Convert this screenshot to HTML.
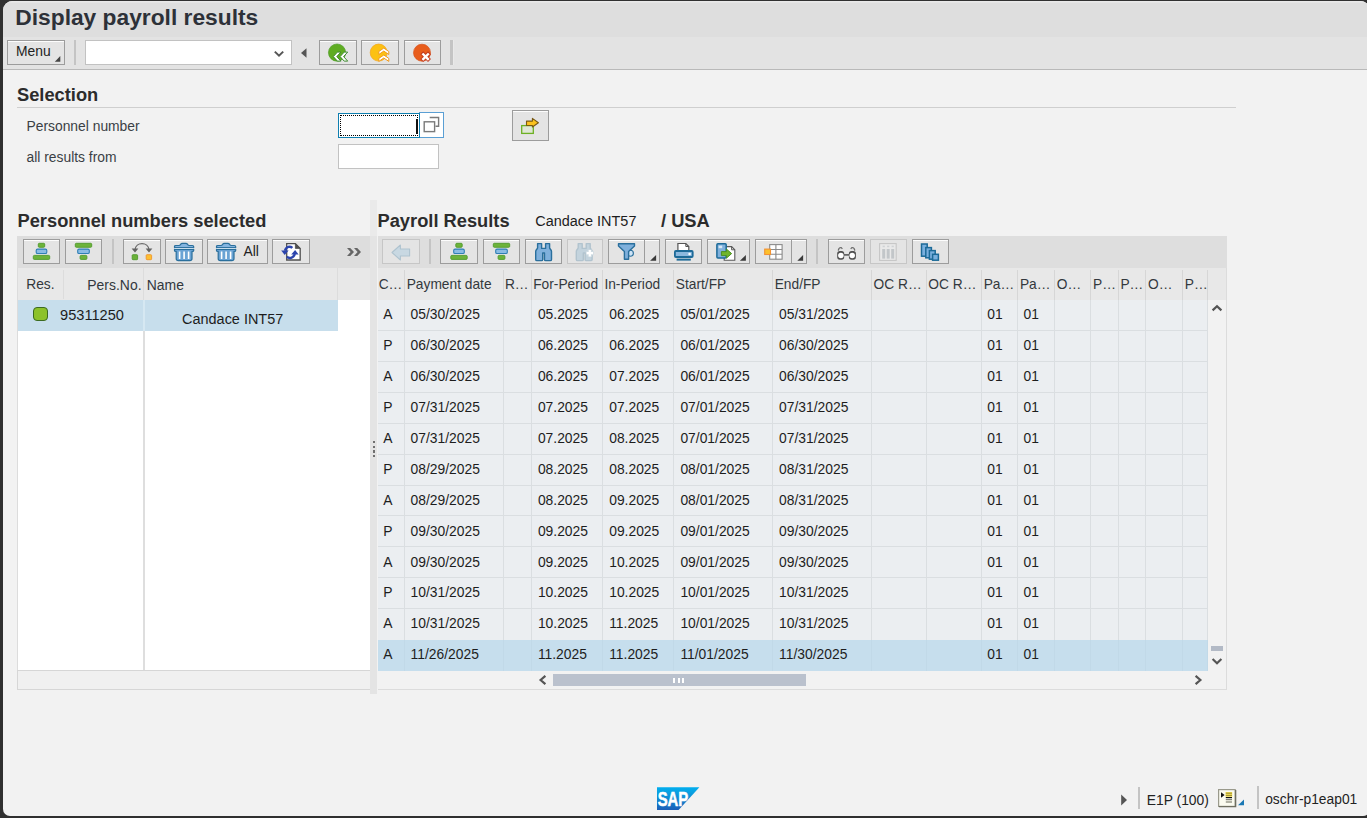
<!DOCTYPE html>
<html>
<head>
<meta charset="utf-8">
<title>Display payroll results</title>
<style>
html,body{margin:0;padding:0;}
body{width:1367px;height:818px;background:#303030;position:relative;overflow:hidden;font-family:"Liberation Sans",sans-serif;color:#222;}
#frame{position:absolute;left:2.5px;top:1.2px;width:1367px;height:815.3px;background:#f2f2f2;border-radius:9.5px 9.5px 7px 7px;overflow:hidden;}
#c{position:absolute;left:0;top:0;width:1367px;height:818px;}
.abs{position:absolute;}
#titleband{left:0;top:0;width:1367px;height:36.2px;background:#dedede;box-shadow:inset 0 1.5px 0 #e9e9e9;}
#toolband{left:0;top:36.2px;width:1367px;height:31.6px;background:#e3e3e3;border-bottom:1px solid #b9b9b9;}
#title{left:15.3px;top:4.2px;font-size:22.78px;font-weight:bold;color:#2d3138;white-space:nowrap;line-height:26px;}
.btn{position:absolute;box-sizing:border-box;border:1px solid #9c9c9c;background:#e4e4e4;box-shadow:inset 0 1px 0 #fdfdfd;}
.btn.dis{border-color:#c6c6c6;box-shadow:none;}
.btn svg{position:absolute;left:-1px;top:-1px;overflow:visible;}
.sep{position:absolute;background:#c4c4c4;}
.txt{position:absolute;white-space:nowrap;}
.h18{font-size:18.3px;font-weight:bold;color:#2c2c2c;line-height:20px;}
.lbl{font-size:13.85px;color:#3a3f45;line-height:15px;}
.t14{font-size:13.85px;color:#1d1d1d;line-height:16px;}
.hd14{font-size:13.75px;color:#33383d;line-height:16px;}
.vline{position:absolute;width:1px;background:#dcdcdc;}
.hline{position:absolute;height:1px;background:#dcdcdc;}
</style>
</head>
<body>
<div id="frame"><div class="abs" id="titleband"></div><div class="abs" id="toolband"></div></div>
<div id="c">
<div class="abs" id="title">Display payroll results</div>
<div class="btn" style="left:7px;top:40px;width:58px;height:25px;"></div>
<div class="txt t14" style="left:16px;top:43px;color:#222;">Menu</div>
<svg class="abs" style="left:54px;top:55px" width="8" height="8"><path d="M6.3 1 L6.3 6.8 L0.8 6.8 Z" fill="#444"/></svg>
<div class="sep" style="left:74.3px;top:40px;width:2px;height:25px;"></div>
<div class="abs" style="left:85px;top:40px;width:207px;height:25px;box-sizing:border-box;background:#fff;border:1px solid #c2c2c2;"></div>
<svg class="abs" style="left:272px;top:48px" width="14" height="10"><path d="M2.8 3.6 L7 7.6 L11.2 3.6" fill="none" stroke="#555" stroke-width="2"/></svg>
<svg class="abs" style="left:299px;top:46px" width="10" height="14"><path d="M7.5 2.3 L2 7 L7.5 11.7 Z" fill="#555"/></svg>
<div class="btn" style="left:319px;top:40px;width:38px;height:25px;"><svg width="38" height="25" viewBox="0 0 38 25"><circle cx="18.05" cy="12.6" r="8.6" fill="#5fac22" stroke="#4f9d28" stroke-width="0.7"/><path d="M18.4 12.1 H21.9 L17.8 16.6 L21.9 21.1 H18.4 L14.3 16.6 Z" fill="#fff" stroke="#3f8a30" stroke-width="1" stroke-linejoin="miter"/><path d="M25.2 12.1 H28.7 L24.6 16.6 L28.7 21.1 H25.2 L21.1 16.6 Z" fill="#fff" stroke="#3f8a30" stroke-width="1" stroke-linejoin="miter"/></svg></div>
<div class="btn" style="left:361px;top:40px;width:38px;height:25px;"><svg width="38" height="25" viewBox="0 0 38 25"><circle cx="17.7" cy="12.6" r="8.5" fill="#fcc112" stroke="#f4a820" stroke-width="0.8"/><path d="M22.8 8.1 L27.8 11.5 V14.5 L22.8 11.1 L17.8 14.5 V11.5 Z" fill="#fff" stroke="#f19a1c" stroke-width="1" stroke-linejoin="miter"/><path d="M22.8 15.0 L27.8 18.4 V21.4 L22.8 18.0 L17.8 21.4 V18.4 Z" fill="#fff" stroke="#f19a1c" stroke-width="1" stroke-linejoin="miter"/></svg></div>
<div class="btn" style="left:404px;top:40px;width:37px;height:25px;"><svg width="37" height="25" viewBox="0 0 37 25"><circle cx="18" cy="12.7" r="8.5" fill="#e85d1c" stroke="#d8501a" stroke-width="0.7"/><g transform="translate(21.6,16.7)"><g transform="rotate(45)"><rect x="-5.5" y="-2.1" width="11" height="4.2" fill="#c23a1e"/></g><g transform="rotate(-45)"><rect x="-5.5" y="-2.1" width="11" height="4.2" fill="#c23a1e"/></g><g transform="rotate(45)"><rect x="-4.5" y="-1.2" width="9" height="2.4" fill="#fff"/></g><g transform="rotate(-45)"><rect x="-4.5" y="-1.2" width="9" height="2.4" fill="#fff"/></g></g></svg></div>
<div class="sep" style="left:450px;top:40px;width:3px;height:25px;box-shadow:1px 0 0 #e9e9e9;"></div>
<div class="txt h18" style="left:17px;top:85px;">Selection</div>
<div class="abs" style="left:17px;top:107px;width:1219px;height:1px;background:#cfcfcf;"></div>
<div class="txt lbl" style="left:26.5px;top:119px;">Personnel number</div>
<div class="txt lbl" style="left:26.5px;top:150px;">all results from</div>
<div class="abs" style="left:338px;top:113px;width:82px;height:25px;box-sizing:border-box;background:#fff;border:1px solid #0f7fb0;"></div>
<div class="abs" style="left:340px;top:115px;width:78px;height:21px;box-sizing:border-box;border:1px dotted #000;"></div>
<div class="abs" style="left:416px;top:119px;width:2px;height:15px;background:#111;"></div>
<div class="abs" style="left:419px;top:112px;width:25px;height:26px;box-sizing:border-box;background:#fff;border:1.5px solid #5a9fd4;border-left:none;"></div>
<div class="abs" style="left:419px;top:113px;width:1px;height:25px;background:#0f7fb0;"></div>
<svg class="abs" style="left:420px;top:113px" width="24" height="24"><path d="M9.7 4.5 H18.6 V13.2 H15.5" fill="none" stroke="#7a7a7a" stroke-width="1.4"/><rect x="4.2" y="8.8" width="10.4" height="9.8" fill="none" stroke="#7a7a7a" stroke-width="1.4"/></svg>
<div class="abs" style="left:338px;top:144px;width:101px;height:25px;box-sizing:border-box;background:#fff;border:1px solid #c2c2c2;"></div>
<div class="btn" style="left:512px;top:110px;width:37px;height:31px;"><svg width="37" height="31" viewBox="0 0 37 31"><rect x="9.7" y="15.6" width="11.6" height="7.8" fill="#dfe6d6" stroke="#6db023" stroke-width="1.3"/><path d="M14.5 11.1 H20.4 V8.4 L26.4 12.7 L20.4 17 V15.5 H14.5 Z" fill="#fbc21e" stroke="#7a5a14" stroke-width="1.1" stroke-linejoin="round"/></svg></div>
<div class="txt h18" style="left:17.5px;top:211px;">Personnel numbers selected</div>
<div class="abs" style="left:17px;top:236px;width:353px;height:32px;background:#dddddd;"></div>
<div class="btn" style="left:23px;top:239px;width:37px;height:25px;"><svg width="37" height="25" viewBox="0 0 37 25"><rect x="15.3" y="4.3" width="6.4" height="4" rx="1" fill="#6db33a" stroke="#4f9a2c" stroke-width="0.9"/><rect x="13.2" y="10.1" width="10.6" height="4.4" rx="1.3" fill="#8bbce4" stroke="#2f7fb5" stroke-width="1.1"/><rect x="10.3" y="16.4" width="16.4" height="4" rx="1" fill="#6db33a" stroke="#4f9a2c" stroke-width="0.9"/></svg></div>
<div class="btn" style="left:65px;top:239px;width:37px;height:25px;"><svg width="37" height="25" viewBox="0 0 37 25"><rect x="10.3" y="4.3" width="16.4" height="4" rx="1" fill="#6db33a" stroke="#4f9a2c" stroke-width="0.9"/><rect x="12.7" y="10.1" width="11.6" height="4.4" rx="1.3" fill="#8bbce4" stroke="#2f7fb5" stroke-width="1.1"/><rect x="15.1" y="16.4" width="6.8" height="4" rx="1" fill="#6db33a" stroke="#4f9a2c" stroke-width="0.9"/></svg></div>
<div class="sep" style="left:112.1px;top:239px;width:2px;height:25px;"></div>
<div class="btn" style="left:123px;top:239px;width:38px;height:25px;"><svg width="38" height="25" viewBox="0 0 38 25"><path d="M12 11 C12.5 2.5 25.5 2.5 26 11" fill="none" stroke="#6a6a6a" stroke-width="1.2"/><path d="M8.6 9.6 H15.4 L12 13.6 Z M22.6 9.6 H29.4 L26 13.6 Z" fill="#636363"/><rect x="9.2" y="15.7" width="5.4" height="5" rx="0.8" fill="#6cb23a" stroke="#4f9a2c" stroke-width="0.9"/><rect x="23.2" y="15.7" width="5.4" height="5" rx="0.8" fill="#fcc032" stroke="#f0952a" stroke-width="0.9"/></svg></div>
<div class="btn" style="left:165px;top:239px;width:38px;height:25px;"><svg width="38" height="25" viewBox="0 0 38 25"><g transform="translate(0,0)"><path d="M9.5 8.6 V7.7 Q9.5 6.5 10.9 6.5 H14 Q15 6.5 15.5 5.5 Q16.1 4.4 17.5 4.4 H20.7 Q22.1 4.4 22.7 5.5 Q23.2 6.5 24.2 6.5 H27.3 Q28.7 6.5 28.7 7.7 V8.6 Z" fill="#85b5e0" stroke="#2a6f9c" stroke-width="1.2" stroke-linejoin="round"/><path d="M9.5 10.3 H28.7 V11.4 Q28.7 12.3 27.3 12.3 H27 V19.5 Q27 21.6 24.8 21.6 H13.4 Q11.2 21.6 11.2 19.5 V12.3 H10.9 Q9.5 12.3 9.5 11.4 Z" fill="#6aa3d4" stroke="#2a6f9c" stroke-width="1.2" stroke-linejoin="round"/><path d="M9.6 9.45 H28.6" stroke="#dceefa" stroke-width="0.8"/><path d="M14.6 12.4 V19.9 M19.1 12.4 V19.9 M23.6 12.4 V19.9" stroke="#fff" stroke-width="1.6"/></g></svg></div>
<div class="btn" style="left:207px;top:239px;width:61px;height:25px;"><svg width="61" height="25" viewBox="0 0 61 25"><g transform="translate(0,0)"><path d="M9.5 8.6 V7.7 Q9.5 6.5 10.9 6.5 H14 Q15 6.5 15.5 5.5 Q16.1 4.4 17.5 4.4 H20.7 Q22.1 4.4 22.7 5.5 Q23.2 6.5 24.2 6.5 H27.3 Q28.7 6.5 28.7 7.7 V8.6 Z" fill="#85b5e0" stroke="#2a6f9c" stroke-width="1.2" stroke-linejoin="round"/><path d="M9.5 10.3 H28.7 V11.4 Q28.7 12.3 27.3 12.3 H27 V19.5 Q27 21.6 24.8 21.6 H13.4 Q11.2 21.6 11.2 19.5 V12.3 H10.9 Q9.5 12.3 9.5 11.4 Z" fill="#6aa3d4" stroke="#2a6f9c" stroke-width="1.2" stroke-linejoin="round"/><path d="M9.6 9.45 H28.6" stroke="#dceefa" stroke-width="0.8"/><path d="M14.6 12.4 V19.9 M19.1 12.4 V19.9 M23.6 12.4 V19.9" stroke="#fff" stroke-width="1.6"/></g></svg></div>
<div class="txt t14" style="left:243.5px;top:243px;color:#222;">All</div>
<div class="btn" style="left:272px;top:239px;width:38px;height:25px;"><svg width="38" height="25" viewBox="0 0 38 25"><path d="M14.7 4.7 H23.4 L28.2 9.4 V21 H14.7 Z" fill="#fff" stroke="#505050" stroke-width="1.3"/><path d="M23.4 4.7 L28.2 9.4 H23.4 Z" fill="#505050" stroke="#505050" stroke-width="0.8"/><path d="M20.4 8.9 C18 6.9 14.2 7.2 13 11.8" fill="none" stroke="#2b44ad" stroke-width="2.5"/><path d="M9.2 11.4 H16.6 L12.7 15.9 Z" fill="#2b44ad"/><path d="M14.8 17.8 C17.2 19.8 21.4 19.5 22.8 15" fill="none" stroke="#2b44ad" stroke-width="2.5"/><path d="M19.2 15.4 H26.6 L23.1 10.9 Z" fill="#2b44ad"/></svg></div>
<svg class="abs" style="left:345px;top:246px" width="18" height="12"><path d="M2 2 H5.2 L9 6 L5.2 10 H2 L5.6 6 Z M9 2 H12.2 L16 6 L12.2 10 H9 L12.6 6 Z" fill="#666"/></svg>
<div class="abs" style="left:17px;top:268px;width:353px;height:31.5px;background:#e8e8e8;"></div>
<div class="abs" style="left:17px;top:299.5px;width:352.5px;height:370.5px;background:#fff;"></div>
<div class="abs" style="left:17.5px;top:299.5px;width:320px;height:31px;background:#c7deec;"></div>
<div class="vline" style="left:63px;top:270px;width:1px;height:29px;"></div>
<div class="vline" style="left:143px;top:268px;width:1px;height:31.5px;"></div>
<div class="abs" style="left:143px;top:299.5px;width:1.5px;height:31px;background:#d6e8f2;"></div>
<div class="abs" style="left:143px;top:330.5px;width:1.5px;height:339.5px;background:#dedede;"></div>
<div class="vline" style="left:337px;top:268px;width:1px;height:31.5px;"></div>
<div class="txt hd14" style="left:26.3px;top:276.8px;">Res.</div>
<div class="txt hd14" style="left:87.3px;top:276.8px;font-size:13.95px;">Pers.No.</div>
<div class="txt hd14" style="left:146.8px;top:276.8px;font-size:13.95px;">Name</div>
<div class="abs" style="left:33px;top:307px;width:15px;height:14px;box-sizing:border-box;border-radius:4px;background:#8cc22a;border:1.6px solid #3c6a22;"></div>
<div class="txt t14" style="left:60.1px;top:306.5px;font-size:14.6px;">95311250</div>
<div class="txt t14" style="left:182.1px;top:310.5px;font-size:14.45px;">Candace INT57</div>
<div class="abs" style="left:17px;top:669.5px;width:353px;height:20px;box-sizing:border-box;background:#f0f0f0;border:1px solid #d6d6d6;border-right:none;"></div>
<div class="abs" style="left:17px;top:268px;width:1px;height:402px;background:#dcdcdc;"></div>
<div class="abs" style="left:370px;top:200px;width:7.1px;height:36px;background:#eaeaea;"></div>
<div class="abs" style="left:370px;top:236px;width:7.1px;height:458px;background:#e4e4e4;"></div>
<div class="abs" style="left:372.7px;top:441px;width:2.3px;height:2.3px;background:#707070;"></div>
<div class="abs" style="left:372.7px;top:445.7px;width:2.3px;height:2.3px;background:#707070;"></div>
<div class="abs" style="left:372.7px;top:450.4px;width:2.3px;height:2.3px;background:#707070;"></div>
<div class="abs" style="left:372.7px;top:455.1px;width:2.3px;height:2.3px;background:#707070;"></div>
<div class="txt h18" style="left:377.5px;top:211px;">Payroll Results</div>
<div class="txt t14" style="left:535.3px;top:212.7px;font-size:14.45px;">Candace INT57</div>
<div class="txt h18" style="left:661px;top:211px;">/ USA</div>
<div class="abs" style="left:377.5px;top:236px;width:849.5px;height:32px;background:#dedede;"></div>
<div class="btn dis" style="left:382px;top:239px;width:38px;height:25px;"><svg width="38" height="25" viewBox="0 0 38 25"><path d="M10 13.5 L18.4 6 V10 H27.6 V17 H18.4 V21 Z" fill="#c8d8e2" stroke="#afc3cf" stroke-width="1.1" stroke-linejoin="round"/></svg></div>
<div class="sep" style="left:429.3px;top:239px;width:2px;height:25px;"></div>
<div class="btn" style="left:440px;top:239px;width:38px;height:25px;"><svg width="38" height="25" viewBox="0 0 38 25"><rect x="15.8" y="4.3" width="6.4" height="4" rx="1" fill="#6db33a" stroke="#4f9a2c" stroke-width="0.9"/><rect x="13.7" y="10.1" width="10.6" height="4.4" rx="1.3" fill="#8bbce4" stroke="#2f7fb5" stroke-width="1.1"/><rect x="10.8" y="16.4" width="16.4" height="4" rx="1" fill="#6db33a" stroke="#4f9a2c" stroke-width="0.9"/></svg></div>
<div class="btn" style="left:483px;top:239px;width:37px;height:25px;"><svg width="37" height="25" viewBox="0 0 37 25"><rect x="10.3" y="4.3" width="16.4" height="4" rx="1" fill="#6db33a" stroke="#4f9a2c" stroke-width="0.9"/><rect x="12.7" y="10.1" width="11.6" height="4.4" rx="1.3" fill="#8bbce4" stroke="#2f7fb5" stroke-width="1.1"/><rect x="15.1" y="16.4" width="6.8" height="4" rx="1" fill="#6db33a" stroke="#4f9a2c" stroke-width="0.9"/></svg></div>
<div class="btn" style="left:525px;top:239px;width:37px;height:25px;"><svg width="37" height="25" viewBox="0 0 37 25"><g transform="translate(0,0)"><path d="M12.6 4.6 H16.6 V9.4 H20.6 V4.6 H24.6 V8.8 C24.6 10 26.5 10.6 26.5 12.4 V20.4 Q26.5 21.6 25.3 21.6 H20.7 Q19.5 21.6 19.5 20.4 V14 H17.7 V20.4 Q17.7 21.6 16.5 21.6 H11.9 Q10.7 21.6 10.7 20.4 V12.4 C10.7 10.6 12.6 10 12.6 8.8 Z" fill="#7fb0dc" stroke="#2a6f9c" stroke-width="1.4" stroke-linejoin="round"/></g></svg></div>
<div class="btn dis" style="left:567px;top:239px;width:36px;height:25px;"><svg width="36" height="25" viewBox="0 0 36 25"><g transform="translate(-1.4,0)"><path d="M12.6 4.6 H16.6 V9.4 H20.6 V4.6 H24.6 V8.8 C24.6 10 26.5 10.6 26.5 12.4 V20.4 Q26.5 21.6 25.3 21.6 H20.7 Q19.5 21.6 19.5 20.4 V14 H17.7 V20.4 Q17.7 21.6 16.5 21.6 H11.9 Q10.7 21.6 10.7 20.4 V12.4 C10.7 10.6 12.6 10 12.6 8.8 Z" fill="#c3d3dd" stroke="#b1c3ce" stroke-width="1.4" stroke-linejoin="round"/></g><path d="M22.8 10.4 V18 M19 14.2 H26.6" stroke="#cfdbe2" stroke-width="4.2"/><path d="M22.8 11 V17.4 M19.6 14.2 H26" stroke="#fff" stroke-width="2.2"/></svg></div>
<div class="btn" style="left:608px;top:239px;width:52px;height:25px;"><svg width="52" height="25" viewBox="0 0 52 25"><circle cx="22.4" cy="14.2" r="3" fill="#cfe4f6" stroke="#2a6f9c" stroke-width="1.1"/><path d="M10.5 4.7 H26.5 V7 L20.6 12.6 V20.3 H16.4 V12.6 L10.5 7 Z" fill="#7fb0dc" stroke="#2a6f9c" stroke-width="1.4" stroke-linejoin="round"/><path d="M36.5 1 V24" stroke="#9c9c9c" stroke-width="1"/><path d="M48.1 16 V21.8 H42.1 Z" fill="#3a3a3a"/></svg></div>
<div class="btn" style="left:665px;top:239px;width:37px;height:25px;"><svg width="37" height="25" viewBox="0 0 37 25"><path d="M12.9 11.5 V4.5 H20.8 L23.8 7.5 V11.5" fill="#fff" stroke="#555" stroke-width="1.2"/><path d="M20.8 4.5 V7.5 H23.8" fill="none" stroke="#555" stroke-width="1"/><rect x="9.9" y="12" width="17.8" height="6" rx="1" fill="#8bb8de" stroke="#1c6a98" stroke-width="1.8"/><circle cx="24.6" cy="15" r="1.3" fill="#fff"/><path d="M11.6 20.6 H25.8" stroke="#1c6a98" stroke-width="2"/></svg></div>
<div class="btn" style="left:707px;top:239px;width:43px;height:25px;"><svg width="43" height="25" viewBox="0 0 43 25"><path d="M17.2 7.6 H24.6 L27.8 10.8 V21.2 H17.2 Z" fill="#fff" stroke="#5a5a5a" stroke-width="1.1"/><path d="M24.6 7.6 V10.8 H27.8" fill="none" stroke="#5a5a5a" stroke-width="1"/><rect x="9.9" y="4.7" width="9.3" height="14.4" rx="1" fill="#7fb0dc" stroke="#1c6a98" stroke-width="1.5"/><rect x="11.6" y="6.6" width="3.6" height="2.6" fill="#d6e8f6"/><path d="M14.4 12.6 H19.4 V10 L24.6 14.6 L19.4 19.2 V16.6 H14.4 Z" fill="#6fb52c" stroke="#4a8f22" stroke-width="1" stroke-linejoin="round"/><path d="M38.9 15.9 V21.8 H32.9 Z" fill="#3a3a3a"/></svg></div>
<div class="btn" style="left:755px;top:239px;width:52px;height:25px;"><svg width="52" height="25" viewBox="0 0 52 25"><rect x="14.7" y="5.6" width="12.4" height="14.6" fill="#fff" stroke="#8a8a8a" stroke-width="1.1"/><path d="M20.9 5.6 V20.2 M14.7 10.5 H27.1 M14.7 15.3 H27.1" stroke="#8a8a8a" stroke-width="1.1"/><rect x="9.7" y="10.1" width="5.8" height="5.4" fill="#fcc02c" stroke="#f39232" stroke-width="1.1"/><path d="M36.5 1 V24" stroke="#9c9c9c" stroke-width="1"/><path d="M48.1 15.9 V21.8 H42.3 Z" fill="#3a3a3a"/></svg></div>
<div class="sep" style="left:816px;top:239px;width:2px;height:25px;"></div>
<div class="btn" style="left:828px;top:239px;width:37px;height:25px;"><svg width="37" height="25" viewBox="0 0 37 25"><rect x="9.2" y="11.9" width="7" height="8.8" rx="2.6" fill="#4f4f4f"/><rect x="20.9" y="11.9" width="7" height="8.8" rx="2.6" fill="#4f4f4f"/><path d="M15.8 15.9 H21.3" stroke="#4f4f4f" stroke-width="1.5"/><circle cx="12.9" cy="16.6" r="2.75" fill="#fff"/><circle cx="24.2" cy="16.6" r="2.75" fill="#fff"/><path d="M10.3 11.6 Q10.6 8.3 13.2 8.5 L14.4 9.8 M26.8 11.6 Q26.5 8.3 23.9 8.5 L22.7 9.8" fill="none" stroke="#6c6c6c" stroke-width="1.2"/></svg></div>
<div class="btn dis" style="left:870px;top:239px;width:37px;height:25px;"><svg width="37" height="25" viewBox="0 0 37 25"><rect x="9.6" y="4.6" width="16.6" height="16.8" fill="#e9e9e9" stroke="#c6c6c6" stroke-width="1.1"/><rect x="12.2" y="10" width="3" height="9.6" fill="#c2c6c9"/><rect x="12.6" y="6.6" width="2.2" height="1.6" fill="#cfd2d4"/><rect x="16.7" y="10" width="3" height="9.6" fill="#c2c6c9"/><rect x="17.099999999999998" y="6.6" width="2.2" height="1.6" fill="#cfd2d4"/><rect x="21.2" y="10" width="3" height="9.6" fill="#c2c6c9"/><rect x="21.599999999999998" y="6.6" width="2.2" height="1.6" fill="#cfd2d4"/></svg></div>
<div class="btn" style="left:912px;top:239px;width:37px;height:25px;"><svg width="37" height="25" viewBox="0 0 37 25"><rect x="9.5" y="5" width="5.7" height="12.2" fill="#7ab0de" stroke="#1c6a98" stroke-width="1.5"/><rect x="13.8" y="8.6" width="5.6" height="10.2" fill="#7ab0de" stroke="#1c6a98" stroke-width="1.5"/><rect x="17.4" y="11.6" width="5.8" height="8.6" fill="#7ab0de" stroke="#1c6a98" stroke-width="1.5"/><rect x="20.6" y="15.3" width="5.8" height="5.9" fill="#7ab0de" stroke="#1c6a98" stroke-width="1.5"/></svg></div>
<div class="abs" style="left:377.5px;top:268px;width:849.5px;height:31.5px;background:#e8e8e8;"></div>
<div class="abs" style="left:377.5px;top:299.5px;width:830.3px;height:371.04px;background:#ebeef1;"></div>
<div class="abs" style="left:377.5px;top:639.62px;width:830.3px;height:30.92px;background:#c6deed;"></div>
<div class="abs" style="left:1208px;top:299.5px;width:19px;height:390px;background:#f2f2f2;"></div>
<div class="abs" style="left:377.5px;top:670.54px;width:849.5px;height:19px;background:#f2f2f2;"></div>
<div class="txt hd14" style="left:378.7px;top:276.8px;">C…</div>
<div class="txt hd14" style="left:406.7px;top:276.8px;">Payment date</div>
<div class="txt hd14" style="left:504.9px;top:276.8px;">R…</div>
<div class="txt hd14" style="left:533.2px;top:276.8px;">For-Period</div>
<div class="txt hd14" style="left:604.4px;top:276.8px;">In-Period</div>
<div class="txt hd14" style="left:675.8px;top:276.8px;">Start/FP</div>
<div class="txt hd14" style="left:774.7px;top:276.8px;">End/FP</div>
<div class="txt hd14" style="left:873.5px;top:276.8px;">OC R…</div>
<div class="txt hd14" style="left:928.3px;top:276.8px;">OC R…</div>
<div class="txt hd14" style="left:983.7px;top:276.8px;">Pa…</div>
<div class="txt hd14" style="left:1019.9px;top:276.8px;">Pa…</div>
<div class="txt hd14" style="left:1056.7px;top:276.8px;">O…</div>
<div class="txt hd14" style="left:1093.1px;top:276.8px;">P…</div>
<div class="txt hd14" style="left:1120.4px;top:276.8px;">P…</div>
<div class="txt hd14" style="left:1148.0px;top:276.8px;">O…</div>
<div class="txt hd14" style="left:1184.8px;top:276.8px;">P…</div>
<div class="abs" style="left:377.5px;top:329.9px;width:830.3px;height:1px;background:#dadee1;"></div>
<div class="abs" style="left:377.5px;top:360.8px;width:830.3px;height:1px;background:#dadee1;"></div>
<div class="abs" style="left:377.5px;top:391.8px;width:830.3px;height:1px;background:#dadee1;"></div>
<div class="abs" style="left:377.5px;top:422.7px;width:830.3px;height:1px;background:#dadee1;"></div>
<div class="abs" style="left:377.5px;top:453.6px;width:830.3px;height:1px;background:#dadee1;"></div>
<div class="abs" style="left:377.5px;top:484.5px;width:830.3px;height:1px;background:#dadee1;"></div>
<div class="abs" style="left:377.5px;top:515.4px;width:830.3px;height:1px;background:#dadee1;"></div>
<div class="abs" style="left:377.5px;top:546.4px;width:830.3px;height:1px;background:#dadee1;"></div>
<div class="abs" style="left:377.5px;top:577.3px;width:830.3px;height:1px;background:#dadee1;"></div>
<div class="abs" style="left:377.5px;top:608.2px;width:830.3px;height:1px;background:#dadee1;"></div>
<div class="abs" style="left:404.0px;top:270px;width:1px;height:29.5px;background:#d6d6d6;"></div>
<div class="abs" style="left:404.0px;top:299.5px;width:1px;height:340.1px;background:#dadee1;"></div>
<div class="abs" style="left:404.0px;top:639.6px;width:1px;height:30.92px;background:#c1d9e8;"></div>
<div class="abs" style="left:503.2px;top:270px;width:1px;height:29.5px;background:#d6d6d6;"></div>
<div class="abs" style="left:503.2px;top:299.5px;width:1px;height:340.1px;background:#dadee1;"></div>
<div class="abs" style="left:503.2px;top:639.6px;width:1px;height:30.92px;background:#c1d9e8;"></div>
<div class="abs" style="left:530.5px;top:270px;width:1px;height:29.5px;background:#d6d6d6;"></div>
<div class="abs" style="left:530.5px;top:299.5px;width:1px;height:340.1px;background:#dadee1;"></div>
<div class="abs" style="left:530.5px;top:639.6px;width:1px;height:30.92px;background:#c1d9e8;"></div>
<div class="abs" style="left:601.7px;top:270px;width:1px;height:29.5px;background:#d6d6d6;"></div>
<div class="abs" style="left:601.7px;top:299.5px;width:1px;height:340.1px;background:#dadee1;"></div>
<div class="abs" style="left:601.7px;top:639.6px;width:1px;height:30.92px;background:#c1d9e8;"></div>
<div class="abs" style="left:673.1px;top:270px;width:1px;height:29.5px;background:#d6d6d6;"></div>
<div class="abs" style="left:673.1px;top:299.5px;width:1px;height:340.1px;background:#dadee1;"></div>
<div class="abs" style="left:673.1px;top:639.6px;width:1px;height:30.92px;background:#c1d9e8;"></div>
<div class="abs" style="left:772.0px;top:270px;width:1px;height:29.5px;background:#d6d6d6;"></div>
<div class="abs" style="left:772.0px;top:299.5px;width:1px;height:340.1px;background:#dadee1;"></div>
<div class="abs" style="left:772.0px;top:639.6px;width:1px;height:30.92px;background:#c1d9e8;"></div>
<div class="abs" style="left:870.8px;top:270px;width:1px;height:29.5px;background:#d6d6d6;"></div>
<div class="abs" style="left:870.8px;top:299.5px;width:1px;height:340.1px;background:#dadee1;"></div>
<div class="abs" style="left:870.8px;top:639.6px;width:1px;height:30.92px;background:#c1d9e8;"></div>
<div class="abs" style="left:925.6px;top:270px;width:1px;height:29.5px;background:#d6d6d6;"></div>
<div class="abs" style="left:925.6px;top:299.5px;width:1px;height:340.1px;background:#dadee1;"></div>
<div class="abs" style="left:925.6px;top:639.6px;width:1px;height:30.92px;background:#c1d9e8;"></div>
<div class="abs" style="left:981.0px;top:270px;width:1px;height:29.5px;background:#d6d6d6;"></div>
<div class="abs" style="left:981.0px;top:299.5px;width:1px;height:340.1px;background:#dadee1;"></div>
<div class="abs" style="left:981.0px;top:639.6px;width:1px;height:30.92px;background:#c1d9e8;"></div>
<div class="abs" style="left:1017.2px;top:270px;width:1px;height:29.5px;background:#d6d6d6;"></div>
<div class="abs" style="left:1017.2px;top:299.5px;width:1px;height:340.1px;background:#dadee1;"></div>
<div class="abs" style="left:1017.2px;top:639.6px;width:1px;height:30.92px;background:#c1d9e8;"></div>
<div class="abs" style="left:1054.0px;top:270px;width:1px;height:29.5px;background:#d6d6d6;"></div>
<div class="abs" style="left:1054.0px;top:299.5px;width:1px;height:340.1px;background:#dadee1;"></div>
<div class="abs" style="left:1054.0px;top:639.6px;width:1px;height:30.92px;background:#c1d9e8;"></div>
<div class="abs" style="left:1089.7px;top:270px;width:1px;height:29.5px;background:#d6d6d6;"></div>
<div class="abs" style="left:1089.7px;top:299.5px;width:1px;height:340.1px;background:#dadee1;"></div>
<div class="abs" style="left:1089.7px;top:639.6px;width:1px;height:30.92px;background:#c1d9e8;"></div>
<div class="abs" style="left:1117.7px;top:270px;width:1px;height:29.5px;background:#d6d6d6;"></div>
<div class="abs" style="left:1117.7px;top:299.5px;width:1px;height:340.1px;background:#dadee1;"></div>
<div class="abs" style="left:1117.7px;top:639.6px;width:1px;height:30.92px;background:#c1d9e8;"></div>
<div class="abs" style="left:1145.1px;top:270px;width:1px;height:29.5px;background:#d6d6d6;"></div>
<div class="abs" style="left:1145.1px;top:299.5px;width:1px;height:340.1px;background:#dadee1;"></div>
<div class="abs" style="left:1145.1px;top:639.6px;width:1px;height:30.92px;background:#c1d9e8;"></div>
<div class="abs" style="left:1181.8px;top:270px;width:1px;height:29.5px;background:#d6d6d6;"></div>
<div class="abs" style="left:1181.8px;top:299.5px;width:1px;height:340.1px;background:#dadee1;"></div>
<div class="abs" style="left:1181.8px;top:639.6px;width:1px;height:30.92px;background:#c1d9e8;"></div>
<div class="abs" style="left:1207.3px;top:270px;width:1px;height:29.5px;background:#d6d6d6;"></div>
<div class="abs" style="left:1207.3px;top:299.5px;width:1px;height:340.1px;background:#dadee1;"></div>
<div class="abs" style="left:1207.3px;top:639.6px;width:1px;height:30.92px;background:#c1d9e8;"></div>
<div class="txt t14" style="left:383.3px;top:306.1px;">A</div>
<div class="txt t14" style="left:410.6px;top:306.1px;">05/30/2025</div>
<div class="txt t14" style="left:537.9px;top:306.1px;">05.2025</div>
<div class="txt t14" style="left:609.2px;top:306.1px;">06.2025</div>
<div class="txt t14" style="left:680.4px;top:306.1px;">05/01/2025</div>
<div class="txt t14" style="left:779.1px;top:306.1px;">05/31/2025</div>
<div class="txt t14" style="left:987.3px;top:306.1px;">01</div>
<div class="txt t14" style="left:1023.6px;top:306.1px;">01</div>
<div class="txt t14" style="left:383.3px;top:337.0px;">P</div>
<div class="txt t14" style="left:410.6px;top:337.0px;">06/30/2025</div>
<div class="txt t14" style="left:537.9px;top:337.0px;">06.2025</div>
<div class="txt t14" style="left:609.2px;top:337.0px;">06.2025</div>
<div class="txt t14" style="left:680.4px;top:337.0px;">06/01/2025</div>
<div class="txt t14" style="left:779.1px;top:337.0px;">06/30/2025</div>
<div class="txt t14" style="left:987.3px;top:337.0px;">01</div>
<div class="txt t14" style="left:1023.6px;top:337.0px;">01</div>
<div class="txt t14" style="left:383.3px;top:367.9px;">A</div>
<div class="txt t14" style="left:410.6px;top:367.9px;">06/30/2025</div>
<div class="txt t14" style="left:537.9px;top:367.9px;">06.2025</div>
<div class="txt t14" style="left:609.2px;top:367.9px;">07.2025</div>
<div class="txt t14" style="left:680.4px;top:367.9px;">06/01/2025</div>
<div class="txt t14" style="left:779.1px;top:367.9px;">06/30/2025</div>
<div class="txt t14" style="left:987.3px;top:367.9px;">01</div>
<div class="txt t14" style="left:1023.6px;top:367.9px;">01</div>
<div class="txt t14" style="left:383.3px;top:398.9px;">P</div>
<div class="txt t14" style="left:410.6px;top:398.9px;">07/31/2025</div>
<div class="txt t14" style="left:537.9px;top:398.9px;">07.2025</div>
<div class="txt t14" style="left:609.2px;top:398.9px;">07.2025</div>
<div class="txt t14" style="left:680.4px;top:398.9px;">07/01/2025</div>
<div class="txt t14" style="left:779.1px;top:398.9px;">07/31/2025</div>
<div class="txt t14" style="left:987.3px;top:398.9px;">01</div>
<div class="txt t14" style="left:1023.6px;top:398.9px;">01</div>
<div class="txt t14" style="left:383.3px;top:429.8px;">A</div>
<div class="txt t14" style="left:410.6px;top:429.8px;">07/31/2025</div>
<div class="txt t14" style="left:537.9px;top:429.8px;">07.2025</div>
<div class="txt t14" style="left:609.2px;top:429.8px;">08.2025</div>
<div class="txt t14" style="left:680.4px;top:429.8px;">07/01/2025</div>
<div class="txt t14" style="left:779.1px;top:429.8px;">07/31/2025</div>
<div class="txt t14" style="left:987.3px;top:429.8px;">01</div>
<div class="txt t14" style="left:1023.6px;top:429.8px;">01</div>
<div class="txt t14" style="left:383.3px;top:460.7px;">P</div>
<div class="txt t14" style="left:410.6px;top:460.7px;">08/29/2025</div>
<div class="txt t14" style="left:537.9px;top:460.7px;">08.2025</div>
<div class="txt t14" style="left:609.2px;top:460.7px;">08.2025</div>
<div class="txt t14" style="left:680.4px;top:460.7px;">08/01/2025</div>
<div class="txt t14" style="left:779.1px;top:460.7px;">08/31/2025</div>
<div class="txt t14" style="left:987.3px;top:460.7px;">01</div>
<div class="txt t14" style="left:1023.6px;top:460.7px;">01</div>
<div class="txt t14" style="left:383.3px;top:491.6px;">A</div>
<div class="txt t14" style="left:410.6px;top:491.6px;">08/29/2025</div>
<div class="txt t14" style="left:537.9px;top:491.6px;">08.2025</div>
<div class="txt t14" style="left:609.2px;top:491.6px;">09.2025</div>
<div class="txt t14" style="left:680.4px;top:491.6px;">08/01/2025</div>
<div class="txt t14" style="left:779.1px;top:491.6px;">08/31/2025</div>
<div class="txt t14" style="left:987.3px;top:491.6px;">01</div>
<div class="txt t14" style="left:1023.6px;top:491.6px;">01</div>
<div class="txt t14" style="left:383.3px;top:522.5px;">P</div>
<div class="txt t14" style="left:410.6px;top:522.5px;">09/30/2025</div>
<div class="txt t14" style="left:537.9px;top:522.5px;">09.2025</div>
<div class="txt t14" style="left:609.2px;top:522.5px;">09.2025</div>
<div class="txt t14" style="left:680.4px;top:522.5px;">09/01/2025</div>
<div class="txt t14" style="left:779.1px;top:522.5px;">09/30/2025</div>
<div class="txt t14" style="left:987.3px;top:522.5px;">01</div>
<div class="txt t14" style="left:1023.6px;top:522.5px;">01</div>
<div class="txt t14" style="left:383.3px;top:553.5px;">A</div>
<div class="txt t14" style="left:410.6px;top:553.5px;">09/30/2025</div>
<div class="txt t14" style="left:537.9px;top:553.5px;">09.2025</div>
<div class="txt t14" style="left:609.2px;top:553.5px;">10.2025</div>
<div class="txt t14" style="left:680.4px;top:553.5px;">09/01/2025</div>
<div class="txt t14" style="left:779.1px;top:553.5px;">09/30/2025</div>
<div class="txt t14" style="left:987.3px;top:553.5px;">01</div>
<div class="txt t14" style="left:1023.6px;top:553.5px;">01</div>
<div class="txt t14" style="left:383.3px;top:584.4px;">P</div>
<div class="txt t14" style="left:410.6px;top:584.4px;">10/31/2025</div>
<div class="txt t14" style="left:537.9px;top:584.4px;">10.2025</div>
<div class="txt t14" style="left:609.2px;top:584.4px;">10.2025</div>
<div class="txt t14" style="left:680.4px;top:584.4px;">10/01/2025</div>
<div class="txt t14" style="left:779.1px;top:584.4px;">10/31/2025</div>
<div class="txt t14" style="left:987.3px;top:584.4px;">01</div>
<div class="txt t14" style="left:1023.6px;top:584.4px;">01</div>
<div class="txt t14" style="left:383.3px;top:615.3px;">A</div>
<div class="txt t14" style="left:410.6px;top:615.3px;">10/31/2025</div>
<div class="txt t14" style="left:537.9px;top:615.3px;">10.2025</div>
<div class="txt t14" style="left:609.2px;top:615.3px;">11.2025</div>
<div class="txt t14" style="left:680.4px;top:615.3px;">10/01/2025</div>
<div class="txt t14" style="left:779.1px;top:615.3px;">10/31/2025</div>
<div class="txt t14" style="left:987.3px;top:615.3px;">01</div>
<div class="txt t14" style="left:1023.6px;top:615.3px;">01</div>
<div class="txt t14" style="left:383.3px;top:646.2px;">A</div>
<div class="txt t14" style="left:410.6px;top:646.2px;">11/26/2025</div>
<div class="txt t14" style="left:537.9px;top:646.2px;">11.2025</div>
<div class="txt t14" style="left:609.2px;top:646.2px;">11.2025</div>
<div class="txt t14" style="left:680.4px;top:646.2px;">11/01/2025</div>
<div class="txt t14" style="left:779.1px;top:646.2px;">11/30/2025</div>
<div class="txt t14" style="left:987.3px;top:646.2px;">01</div>
<div class="txt t14" style="left:1023.6px;top:646.2px;">01</div>
<div class="abs" style="left:1225.8px;top:268px;width:1px;height:421.5px;background:#dcdcdc;"></div>
<div class="abs" style="left:377.5px;top:689px;width:849.3px;height:1px;background:#dcdcdc;"></div>
<div class="abs" style="left:17px;top:689px;width:353px;height:1px;background:#d6d6d6;"></div>
<svg class="abs" style="left:1210px;top:303px" width="14" height="10"><path d="M2.6 7.4 L7 3.2 L11.4 7.4" fill="none" stroke="#555" stroke-width="2.2"/></svg>
<svg class="abs" style="left:1210px;top:656px" width="14" height="10"><path d="M2.6 3 L7 7.2 L11.4 3" fill="none" stroke="#555" stroke-width="2.2"/></svg>
<div class="abs" style="left:1211px;top:646px;width:12px;height:4.6px;background:#b3bac6;"></div>
<svg class="abs" style="left:537px;top:674px" width="12" height="12"><path d="M8.4 1.8 L3.6 6 L8.4 10.2" fill="none" stroke="#555" stroke-width="2.2"/></svg>
<svg class="abs" style="left:1192px;top:674px" width="12" height="12"><path d="M3.6 1.8 L8.4 6 L3.6 10.2" fill="none" stroke="#555" stroke-width="2.2"/></svg>
<div class="abs" style="left:553px;top:674px;width:253px;height:12px;background:#bac1cd;"></div>
<div class="abs" style="left:673.3px;top:678px;width:2.2px;height:4.6px;background:#fff;"></div>
<div class="abs" style="left:677.8px;top:678px;width:2.2px;height:4.6px;background:#fff;"></div>
<div class="abs" style="left:682.3px;top:678px;width:2.2px;height:4.6px;background:#fff;"></div>
<svg class="abs" style="left:1119px;top:792px" width="10" height="16"><path d="M2.2 2.4 L8 7.9 L2.2 13.4 Z" fill="#555"/></svg>
<div class="sep" style="left:1138.1px;top:786.5px;width:2px;height:22px;"></div>
<div class="txt t14" style="left:1146.8px;top:791.5px;color:#222;">E1P (100)</div>
<svg class="abs" style="left:1218px;top:789px" width="28" height="19"><rect x="0.6" y="0.6" width="16.6" height="16.8" fill="#fbfbf0" stroke="#9a9a8c" stroke-width="1.2"/><path d="M1 17.6 H17.6 V1" fill="none" stroke="#6e6e60" stroke-width="1.4"/><rect x="7.6" y="3" width="6.6" height="4.8" fill="#f3df55"/><path d="M3 3.2 L6.6 6 L3 8.8 Z" fill="#111"/><path d="M7.8 4.2 H14 M7.8 6.4 H14" stroke="#9a8a30" stroke-width="1"/><path d="M7.8 8.6 H14" stroke="#111" stroke-width="1.2"/><path d="M7.8 10.7 H14" stroke="#55554a" stroke-width="0.9"/><path d="M7.8 13 H14" stroke="#8a8a7c" stroke-width="1.3"/><path d="M26 10.6 V16.2 H20 Z" fill="#1a78b4"/></svg>
<div class="sep" style="left:1257px;top:786px;width:2px;height:23px;"></div>
<div class="txt t14" style="left:1265.2px;top:791.5px;color:#222;font-size:13.8px;">oschr-p1eap01</div>
<svg class="abs" style="left:656px;top:786px" width="46" height="26" viewBox="0 0 46 26"><defs><linearGradient id="sapg" x1="0" y1="0" x2="0" y2="1"><stop offset="0" stop-color="#00aeef"/><stop offset="0.25" stop-color="#0a9fe0"/><stop offset="1" stop-color="#1b5fb8"/></linearGradient></defs><path d="M1 1.2 H43.4 L22.6 23.9 H1 Z" fill="url(#sapg)"/><text x="1.7" y="19.7" font-family="Liberation Sans,sans-serif" font-weight="bold" font-size="19.6" fill="#fff" textLength="30.6" lengthAdjust="spacingAndGlyphs" stroke="#fff" stroke-width="0.5">SAP</text></svg>
</div>
</body>
</html>
